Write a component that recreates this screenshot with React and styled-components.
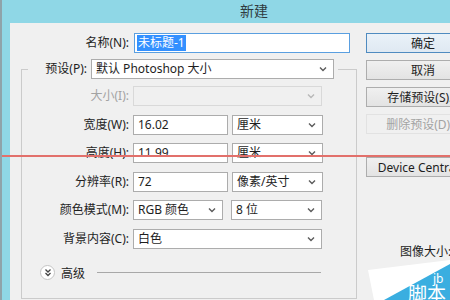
import React from 'react';
import styled, { createGlobalStyle } from 'styled-components';

const GlobalStyle = createGlobalStyle`
  html, body {
    margin: 0;
    padding: 0;
    background: #f0f0f0;
  }
  * {
    box-sizing: border-box;
  }
`;

const FONT = `"Noto Sans", "Noto Sans CJK SC", sans-serif`;

const Window = styled.div`
  position: relative;
  width: 450px;
  height: 300px;
  overflow: hidden;
  display: flex;
  flex-direction: column;
  background: #8fd7e6;
  border-left: 2px solid #8fa3aa;
  font-family: ${FONT};
  font-size: 12px;
  color: #1e1e1e;
`;

const TitleBar = styled.div`
  height: 23px;
  flex: none;
  padding: 3px 0 0 238px;
  font-size: 14px;
  color: #2f3b40;
  line-height: 16px;
`;

const Client = styled.div`
  flex: 1;
  display: flex;
  margin-left: 8px;
  background: #f0f0f0;
  min-height: 0;
`;

const FormColumn = styled.div`
  width: 347px;
  flex: none;
  display: flex;
  flex-direction: column;
  padding-top: 10px;
`;

const NameRow = styled.div`
  display: flex;
  align-items: center;
  gap: 5px;
`;

const Label = styled.div`
  width: ${({ $w }) => $w}px;
  flex: none;
  text-align: right;
  white-space: nowrap;
  line-height: 20px;
  color: ${({ $disabled }) => ($disabled ? '#a3a3a3' : '#1e1e1e')};
`;

const NameInput = styled.div`
  width: 216px;
  height: 20px;
  border: 1px solid #5a9fe0;
  background: #fff;
  padding: 1px 2px;
  line-height: 16px;
`;

const Selected = styled.span`
  display: inline-block;
  background: #3390ff;
  color: #fff;
  padding: 0 1px;
`;

const GroupBox = styled.fieldset`
  flex: 1;
  margin: 6px 0 1px 11px;
  padding: 0;
  border: 1px solid #cbcbcb;
  min-width: 0;
`;

const Legend = styled.legend`
  margin-left: 6px;
  padding: 0 4px 0 2px;
`;

const LegendRow = styled.div`
  display: flex;
  align-items: center;
  gap: 4px;
`;

const Rows = styled.div`
  display: grid;
  grid-template-columns: 107px auto;
  column-gap: 4px;
  row-gap: 8.5px;
  margin-top: 7px;
  align-items: center;
`;

const Controls = styled.div`
  display: flex;
  gap: ${({ $gap }) => $gap}px;
`;

const Field = styled.div`
  width: ${({ $w }) => $w}px;
  height: 20px;
  border: 1px solid ${({ $disabled }) => ($disabled ? '#d9d9d9' : '#acacac')};
  background: ${({ $disabled }) => ($disabled ? '#f0f0f0' : '#fff')};
  padding: 0 6px 0 4px;
  display: flex;
  align-items: center;
  justify-content: space-between;
  line-height: 18px;
  white-space: nowrap;
`;

const Chevron = ({ color = '#5b5b5b' }) => (
  <svg width="8" height="6" viewBox="0 0 8 6">
    <polyline points="1,1.5 4,4.5 7,1.5" fill="none" stroke={color} strokeWidth="1.4" />
  </svg>
);

const Select = ({ w, disabled, children }) => (
  <Field $w={w} $disabled={disabled}>
    <span>{children}</span>
    <Chevron color={disabled ? '#b8b8b8' : '#5b5b5b'} />
  </Field>
);

const Advanced = styled.div`
  display: flex;
  align-items: center;
  margin: 14px 0 0 18px;
  height: 20px;
  gap: 6px;
`;

const RoundButton = styled.div`
  width: 15px;
  height: 15px;
  border-radius: 50%;
  border: 1px solid #c4c4c4;
  background: #fff;
  display: flex;
  align-items: center;
  justify-content: center;
`;

const Rule = styled.div`
  width: 224px;
  height: 1px;
  background: #a8a8a8;
  margin-left: 6px;
`;

const ButtonColumn = styled.div`
  flex: 1;
  display: flex;
  flex-direction: column;
  padding: 10px 0 0 9px;
  gap: 7px;
`;

const Button = styled.div`
  width: 114px;
  height: 20px;
  flex: none;
  display: flex;
  align-items: center;
  justify-content: center;
  border: 1px solid ${({ $primary, $disabled }) =>
    $primary ? '#4f8bc0' : $disabled ? '#e2e2e2' : '#adadad'};
  background: ${({ $primary, $disabled }) =>
    $primary
      ? 'linear-gradient(#eaf2f9, #dfe9f2)'
      : $disabled
      ? '#f0f0f0'
      : 'linear-gradient(#f0f0f0, #e3e3e3)'};
  color: ${({ $disabled }) => ($disabled ? '#a3a3a3' : '#1e1e1e')};
  margin-top: ${({ $space }) => $space || 0}px;
  white-space: nowrap;
`;

const InfoText = styled.div`
  margin: 58px 0 0 34px;
  white-space: nowrap;
`;

const RedLine = styled.div`
  position: absolute;
  left: 0;
  right: 0;
  top: 155px;
  height: 2px;
  background: #e2706b;
  z-index: 2;
`;

const Watermark = styled.svg`
  position: absolute;
  right: 0;
  bottom: 0;
  z-index: 3;
`;

const App = () => {
  return (
    <>
      <GlobalStyle />
      <Window>
        <TitleBar>新建</TitleBar>
        <Client>
          <FormColumn>
            <NameRow>
              <Label $w={119}>名称(N):</Label>
              <NameInput>
                <Selected>未标题-1</Selected>
              </NameInput>
            </NameRow>
            <GroupBox>
              <Legend>
                <LegendRow>
                  <Label $w={57}>预设(P):</Label>
                  <Select w={243}>默认 Photoshop 大小</Select>
                </LegendRow>
              </Legend>
              <Rows>
                <Label $w={107} $disabled>大小(I):</Label>
                <Select w={189} disabled />

                <Label $w={107}>宽度(W):</Label>
                <Controls $gap={4}>
                  <Field $w={95}>16.02</Field>
                  <Select w={91}>厘米</Select>
                </Controls>

                <Label $w={107}>高度(H):</Label>
                <Controls $gap={4}>
                  <Field $w={95}>11.99</Field>
                  <Select w={91}>厘米</Select>
                </Controls>

                <Label $w={107}>分辨率(R):</Label>
                <Controls $gap={4}>
                  <Field $w={95}>72</Field>
                  <Select w={91}>像素/英寸</Select>
                </Controls>

                <Label $w={107}>颜色模式(M):</Label>
                <Controls $gap={8}>
                  <Select w={90}>RGB 颜色</Select>
                  <Select w={91}>8 位</Select>
                </Controls>

                <Label $w={107}>背景内容(C):</Label>
                <Select w={189}>白色</Select>
              </Rows>
              <Advanced>
                <RoundButton>
                  <svg width="8" height="9" viewBox="0 0 8 9">
                    <polyline points="1.5,1.5 4,4 6.5,1.5" fill="none" stroke="#444" strokeWidth="1.3" />
                    <polyline points="1.5,5 4,7.5 6.5,5" fill="none" stroke="#444" strokeWidth="1.3" />
                  </svg>
                </RoundButton>
                <span>高级</span>
                <Rule />
              </Advanced>
            </GroupBox>
          </FormColumn>
          <ButtonColumn>
            <Button $primary>确定</Button>
            <Button>取消</Button>
            <Button>存储预设(S)...</Button>
            <Button $disabled>删除预设(D)...</Button>
            <Button $space={16}>Device Central...</Button>
            <InfoText>图像大小:</InfoText>
          </ButtonColumn>
        </Client>
        <RedLine />
        <Watermark width="84" height="40" viewBox="0 0 84 40">
          <polygon points="2,10 84,0 84,40 8,40" fill="#ffffff" />
          <polygon points="18,40 84,4 84,40" fill="#3aaee0" />
          <text x="67" y="23" fill="#ffffff" fontSize="12" fontFamily="Noto Sans, sans-serif">jb</text>
          <text x="42" y="41" fill="#ffffff" fontSize="19" fontFamily="Noto Sans CJK SC, sans-serif">脚本</text>
        </Watermark>
      </Window>
    </>
  );
};

export default App;
